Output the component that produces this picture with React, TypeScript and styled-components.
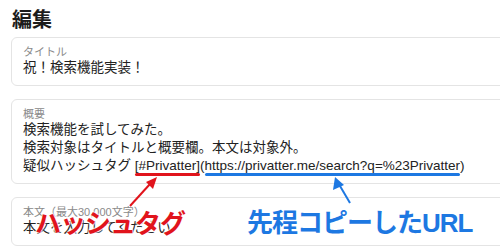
import React from "react";
import styled, { createGlobalStyle } from "styled-components";

const GlobalStyle = createGlobalStyle`
  html, body {
    margin: 0;
    padding: 0;
    background: #fff;
    overflow: hidden;
  }
  body {
    font-family: "Liberation Sans", "Noto Sans CJK JP", sans-serif;
    color: #222;
  }
`;

const Page = styled.div`
  position: relative;
  width: 500px;
  height: 250px;
  overflow: hidden;
  padding: 6px 0 0 11px;
  box-sizing: border-box;
`;

const Heading = styled.h1`
  margin: 0 0 3px 1px;
  font-size: 20px;
  line-height: 28px;
  font-weight: 700;
  color: #1c1c1c;
`;

const Card = styled.div`
  width: 540px;
  box-sizing: border-box;
  border: 1px solid #e4e4e4;
  border-radius: 6px;
  padding: 7px 11px 8px;
  margin-bottom: 13px;
`;

const Label = styled.div`
  font-size: 11px;
  line-height: 14px;
  color: #8a8a8a;
`;

const Value = styled.div`
  font-size: 13.5px;
  line-height: 18px;
  color: #222;
  white-space: nowrap;
`;

const Mark = styled.span<{ $color: string }>`
  position: relative;
  &::after {
    content: "";
    position: absolute;
    left: 0;
    right: 0;
    bottom: -3px;
    height: 3px;
    border-radius: 2px;
    background: ${(p) => p.$color};
  }
`;

const Callout = styled.div<{ $color: string; $left: number; $top: number }>`
  position: absolute;
  left: ${(p) => p.$left}px;
  top: ${(p) => p.$top}px;
  font-size: 26px;
  line-height: 30px;
  font-weight: 700;
  letter-spacing: -1px;
  white-space: nowrap;
  color: ${(p) => p.$color};
  text-shadow: 0 0 2px #fff, 0 0 2px #fff, 0 0 3px #fff;
`;

const Arrows = styled.svg`
  position: absolute;
  left: 0;
  top: 0;
  pointer-events: none;
`;

const RED = "#e1141c";
const BLUE = "#1d78e2";

export default function App() {
  return (
    <>
      <GlobalStyle />
      <Page>
        <Heading>編集</Heading>
        <Card>
          <Label>タイトル</Label>
          <Value>祝！検索機能実装！</Value>
        </Card>
        <Card>
          <Label>概要</Label>
          <Value>検索機能を試してみた。</Value>
          <Value>検索対象はタイトルと概要欄。本文は対象外。</Value>
          <Value>
            疑似ハッシュタグ <Mark $color={RED}>[#Privatter]</Mark>(
            <Mark $color={BLUE}>https://privatter.me/search?q=%23Privatter</Mark>)
          </Value>
        </Card>
        <Card>
          <Label>本文（最大30,000文字）</Label>
          <Value>本文を入力してください</Value>
        </Card>

        <Arrows width="500" height="250" viewBox="0 0 500 250">
          <line x1="130" y1="206" x2="150" y2="184" stroke={RED} strokeWidth="2" />
          <polygon points="157,177 146,182 153,189" fill={RED} />
          <line x1="350" y1="203" x2="340" y2="186" stroke={BLUE} strokeWidth="2" />
          <polygon points="335,177 333,190 344,185" fill={BLUE} />
        </Arrows>
        <Callout $color={RED} $left={35} $top={209}>
          ハッシュタグ
        </Callout>
        <Callout $color={BLUE} $left={247} $top={208}>
          先程コピーしたURL
        </Callout>
      </Page>
    </>
  );
}
